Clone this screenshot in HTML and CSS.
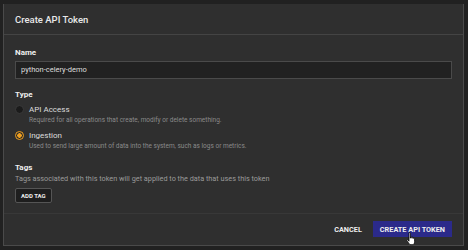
FILE: index.html
```html
<!DOCTYPE html>
<html lang="en">

<head>
    <meta charset="UTF-8">
    <meta name="viewport" content="width=device-width, initial-scale=1.0">
    <title>Create API Token</title>
    <link rel="stylesheet" href="styles.css">
</head>

<body>
    <main class="dialog">
        <header class="dialogHeader">
            <h1>Create API Token</h1>
        </header>
        <form class="dialogBody">
            <div class="field">
                <label for="name">Name</label>
                <input type="text" id="name" name="name" value="python-celery-demo" />
            </div>
            <div class="field">
                <h2>Type</h2>
                <div class="radioOption">
                    <span class="radio"></span>
                    <span class="radioLabel">API Access</span>
                </div>
                <p class="hint">Required for all operations that create, modify or delete something.</p>
                <div class="radioOption">
                    <span class="radio checked"></span>
                    <span class="radioLabel">Ingestion</span>
                </div>
                <p class="hint">Used to send large amount of data into the system, such as logs or metrics.</p>
            </div>
            <div class="field">
                <h2>Tags</h2>
                <p class="tagsHint">Tags associated with this token will get applied to the data that uses this token</p>
                <button type="button" class="button-add">ADD TAG</button>
            </div>
        </form>
        <footer class="dialogFooter">
            <button type="button" class="button-cancel">CANCEL</button>
            <button type="button" class="button-create">CREATE API TOKEN
                <svg class="cursor" width="11" height="14" viewBox="0 0 11 14">
                    <path d="M3 1.2c0-.7 1.4-.7 1.4 0v5l.1-1c0-.6 1.3-.6 1.3 0v1l.1-.6c0-.6 1.3-.6 1.3 0v1l.1-.5c0-.6 1.3-.6 1.3 0v3.6c0 1.4-.8 2.6-1.3 3H4c-.6-.6-2.6-3.4-3.1-4.3-.3-.6.5-1.2 1-.6L3 9.2z" fill="#fff" stroke="#000" stroke-width="0.8" />
                </svg>
            </button>
        </footer>
    </main>
</body>

</html>
```

FILE: styles.css
```css
* {
    font-family: 'Roboto', sans-serif;
    box-sizing: border-box;
}

body {
    margin: 0;
    padding: 4px 4px 4px 3px;
    background-color: #212121;
    height: 250px;
}

h1,
h2,
p {
    padding: 0;
    margin: 0;
}

.dialog {
    display: flex;
    flex-direction: column;
    height: 242px;
    background-color: #2f2f2f;
    border-left: 1px solid #4a4a4a;
    border-right: 1px solid #4a4a4a;
    border-bottom: 1px solid #4a4a4a;
}

.dialogHeader {
    display: flex;
    align-items: center;
    height: 31px;
    padding: 0 11px;
    border-bottom: 1px solid #444;
}

.dialogHeader h1 {
    color: #e8e8e8;
    font-size: 9.5px;
    font-weight: 500;
}

.dialogBody {
    display: flex;
    flex-direction: column;
    gap: 11px;
    padding: 13px 11px 10px;
    border-bottom: 1px solid #383838;
}

.field {
    display: flex;
    flex-direction: column;
}

.field label,
.field h2 {
    color: #eee;
    font-size: 8px;
    font-weight: 700;
    margin-bottom: 2px;
}

.field label {
    margin-bottom: 3.5px;
}

.field input {
    height: 18px;
    padding: 0 5px;
    background-color: #212121;
    border: 1px solid #4a4a4a;
    color: #ddd;
    font-size: 7.5px;
}

.radioOption {
    display: flex;
    align-items: center;
    gap: 5px;
    height: 10px;
    margin-top: 4px;
}

.radio {
    width: 9px;
    height: 9px;
    border-radius: 50%;
    background-color: #1b1b1b;
    border: 1px solid #3a3a3a;
}

.radio.checked {
    border: 1px solid #f0a020;
    background: radial-gradient(circle, #f0a020 0 2px, #2a2a2a 2.5px);
}

.radioLabel {
    color: #ddd;
    font-size: 8px;
}

.hint {
    color: #8a8a8a;
    font-size: 6.5px;
    margin: 1.5px 0 2px 14px;
}

.tagsHint {
    color: #9a9a9a;
    font-size: 7.3px;
    margin-bottom: 5px;
}

.button-add {
    align-self: flex-start;
    height: 15px;
    background-color: #1e1e1e;
    border: 1px solid #555;
    border-radius: 2px;
    color: #eee;
    font-size: 6px;
    font-weight: 700;
    padding: 0 5px;
}

.dialogFooter {
    display: flex;
    justify-content: flex-end;
    align-items: center;
    gap: 11px;
    flex: 1;
    padding: 0 11px;
}

.button-cancel {
    background: none;
    border: none;
    padding: 0;
    color: #eee;
    font-size: 7.3px;
    font-weight: 700;
}

.button-create {
    position: relative;
    background-color: #2b2a8a;
    border: none;
    color: #eee;
    font-size: 7.3px;
    font-weight: 700;
    height: 16px;
    padding: 0 7px;
}

.cursor {
    position: absolute;
    left: 33px;
    top: 11px;
}
```
